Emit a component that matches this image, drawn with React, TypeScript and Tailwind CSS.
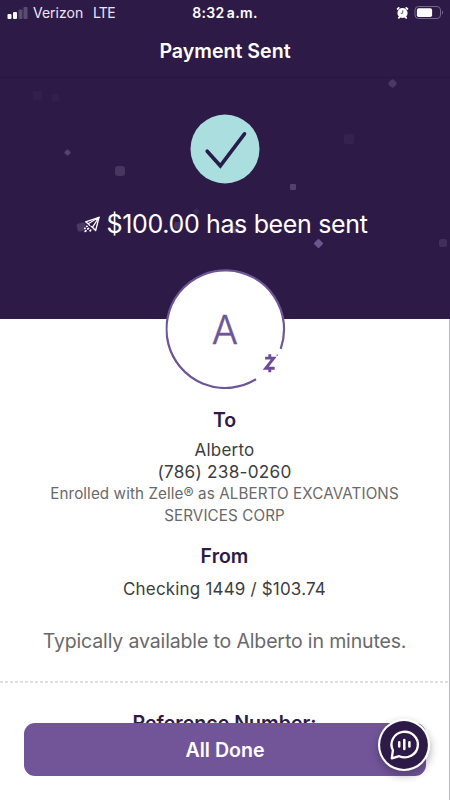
const sparkles = [
  "left-[33px] top-[91px] size-[9px] bg-white/[0.025]",
  "left-[52px] top-[94px] size-[7px] bg-white/[0.025]",
  "left-[65px] top-[150px] size-[5px] rotate-45 rounded-[1px] bg-[#55436d]",
  "left-[115px] top-[166px] size-[10px] rounded-[3px] bg-[#483660]",
  "left-[77px] top-[223px] h-[8px] w-[9px] -rotate-12 rounded-[2px] bg-[#4a3963]",
  "left-[174px] top-[222px] size-[7px] rounded-[2px] bg-[#43315e]",
  "left-[194px] top-[209px] size-[5px] rotate-45 bg-[#3b2954]",
  "left-[232px] top-[226px] size-[7px] rounded-[2px] bg-[#4b3b6b]",
  "left-[389px] top-[80px] size-[7px] rotate-45 rounded-[2px] bg-[#4b3963]",
  "left-[344px] top-[134px] size-[10px] rounded-[2px] bg-[#36224f]",
  "left-[290px] top-[184px] size-[6px] rounded-[1px] bg-[#55416b]",
  "left-[315px] top-[240px] size-[7px] rotate-45 rounded-[1px] bg-[#6c568b]",
  "left-[439px] top-[239px] size-[8px] rounded-[2px] bg-[#412f5b]",
];

function StatusBar() {
  return (
    <div className="relative flex h-[25px] items-center text-[14px] leading-[26px]">
      <svg className="ml-[7px] h-[14px] w-[21px]" viewBox="0 0 21 14" fill="#fff">
        <rect x="0.5" y="8" width="4" height="5" rx="1" />
        <rect x="6" y="6" width="4" height="7" rx="1" />
        <rect x="11.5" y="3.5" width="4" height="9.5" rx="1" opacity="0.22" />
        <rect x="16.5" y="1" width="4" height="12" rx="1" opacity="0.22" />
      </svg>
      <span className="ml-[5px] w-[60px] text-left text-[#ece6f4]">Verizon</span>
      <span className="tracking-[-0.7px] text-[#ece6f4]">LTE</span>
      <span className="absolute left-0 w-full text-center font-semibold tracking-[0.35px] [word-spacing:-1.8px]">8:32 a.m.</span>
      <svg className="ml-auto h-[14px] w-[13px]" viewBox="0 0 13 14">
        <g stroke="#fff" strokeWidth="1.8" strokeLinecap="round">
          <path d="M1.6 3 2.8 1.9M11.4 3 10.2 1.9M2.8 11.8l1-1M10.2 11.8l-1-1" />
        </g>
        <circle cx="6.5" cy="7" r="5.1" fill="#fff" />
        <path d="M6.7 4.3v3H4.6" fill="none" stroke="#5d4b75" strokeWidth="0.9" />
      </svg>
      <svg className="mr-[6px] ml-[4px] h-[15px] w-[31px]" viewBox="0 0 31 15">
        <rect x="2" y="1.5" width="25.5" height="12" rx="3.5" fill="none" stroke="#75668c" />
        <rect x="3.9" y="3.2" width="15.2" height="8.8" rx="1.8" fill="#fff" />
        <path d="M29 5.5v4c1.5-.7 1.5-3.3 0-4" fill="#75668c" />
      </svg>
    </div>
  );
}

function Hero() {
  return (
    <section className="flex h-[242px] flex-col items-center border-t border-[#281540] text-white">
      <svg className="mt-[36px] size-[70px]" viewBox="0 0 70 70">
        <circle cx="35" cy="35" r="34.5" fill="#abdedf" />
        <path d="M17.2 37.2 30.3 51.8 54.5 19.8" fill="none" stroke="#281c4a" strokeWidth="3.6" strokeLinecap="round" />
      </svg>
      <div className="mt-[23px] flex h-[35px] items-center">
        <svg className="mr-[7px] size-[17px]" viewBox="0 0 17 17" fill="none" stroke="#fff" strokeWidth="1.4" strokeLinejoin="round" strokeLinecap="round">
          <path d="M5.2 7.7 2.6 5.8 16 1.3 12.6 14.6 9.4 11.3" />
          <path d="M16 1.3 5.2 7.7 6.6 9.4M16 1.3 9.4 11.3 7.9 10.1" strokeWidth="1.2" />
          <path d="M3.8 10.3h.3M1.8 12.3h.2M5.6 12.3 4.8 13M3 14.8 2.2 15.4M7.7 14.2 7.1 14.8" strokeWidth="1.7" />
        </svg>
        <span className="text-[25px] leading-[35px] tracking-[-0.35px] whitespace-nowrap">$100.00 has been sent</span>
      </div>
    </section>
  );
}

function Avatar() {
  return (
    <div className="relative mx-auto -mt-[50.5px] size-[120px] translate-x-[0.5px]">
      <svg className="absolute inset-0" viewBox="0 0 120 120">
        <circle cx="60" cy="60" r="58.9" fill="#fff" />
        <path d="M115.2 79.8A58.8 58.8 0 1 0 90.5 110.3" fill="none" stroke="#6d5596" strokeWidth="2.2" />
        <path d="M99.6 89.1h8.6L100.2 99.3h9" fill="none" stroke="#6d4b98" strokeWidth="2.9" />
        <path d="M104.3 85.2v3.5M104.3 99.5v3.7" fill="none" stroke="#6d4b98" strokeWidth="2.9" />
        <circle cx="111.7" cy="86.2" r="0.9" fill="#a997c4" />
      </svg>
      <span className="relative block text-center text-[39px] leading-[121px] font-light text-[#6d5596] [-webkit-text-stroke:0.4px_#6d5596]">A</span>
    </div>
  );
}

function ChatButton() {
  return (
    <div className="absolute top-[-4px] left-[378px] size-[52px] rounded-full shadow-[0_4px_9px_rgba(40,30,60,0.4)]">
      <svg className="size-[52px]" viewBox="0 0 52 52">
        <circle cx="26" cy="26" r="26" fill="#fff" />
        <circle cx="26" cy="26" r="23.9" fill="#2e1a47" />
        <g fill="none" stroke="#fff" strokeLinecap="round" strokeLinejoin="round">
          <path d="M13.8 39.3 14.9 31.3A13.2 12.8 0 1 1 21.2 37.2Z" strokeWidth="2.3" />
          <path d="M21.2 23.2v4.2M26.3 21v9.1M31.4 23.2v4.2" strokeWidth="2.5" />
        </g>
      </svg>
    </div>
  );
}

export default function App() {
  return (
    <main className="relative h-[800px] w-[450px] overflow-hidden bg-white text-center font-['Inter','Liberation_Sans',sans-serif]">
      <div className="relative h-[319px] bg-[#2e1a47] text-white">
        {sparkles.map((place) => (
          <i key={place} className={`absolute ${place}`} />
        ))}
        <div className="relative">
          <StatusBar />
          <h1 className="h-[52px] text-[19.6px] leading-[53px] font-semibold">Payment Sent</h1>
          <Hero />
        </div>
      </div>
      <div className="flow-root h-[481px] border-r border-[#b9b8bc]">
        <Avatar />
        <div className="flex flex-col whitespace-nowrap">
          <h2 className="mt-[19.5px] text-[19.5px] leading-[24px] font-semibold tracking-[-0.2px] text-[#2e1a47]">To</h2>
          <p className="mt-[7px] text-[17px] leading-[22px] tracking-[0.2px] text-[#3d3d3f]">Alberto</p>
          <p className="text-[17.2px] leading-[21px] tracking-[0.25px] text-[#3d3d3f]">(786) 238-0260</p>
          <p className="mt-px text-[15.2px] leading-[22px] tracking-[0.1px] text-[#69696b]">
            Enrolled with Zelle® as ALBERTO EXCAVATIONS
            <br />
            SERVICES CORP
          </p>
          <h2 className="mt-[17px] text-[19.5px] leading-[24px] font-semibold text-[#2e1a47]">From</h2>
          <p className="mt-[10px] text-[17px] leading-[22px] tracking-[0.18px] text-[#3d3d3f]">Checking 1449 / $103.74</p>
          <p className="mt-[27px] text-[19.5px] leading-[28px] tracking-[-0.14px] text-[#69696b]">Typically available to Alberto in minutes.</p>
          <div className="mt-[26px] h-[2px] bg-[repeating-linear-gradient(90deg,#dfdfe0_0_3px,#fff_3px_5px)]" />
          <h2 className="mt-[28px] text-[19.6px] leading-[24px] font-semibold text-[#2e1a47]">Reference Number:</h2>
        </div>
        <div className="relative -mt-[12px] h-[77px] bg-white">
          <button className="ml-6 block h-[53px] w-[402px] rounded-[11px] bg-[#725599] text-[19.6px] leading-[54px] font-semibold text-white">All Done</button>
          <ChatButton />
        </div>
      </div>
    </main>
  );
}
